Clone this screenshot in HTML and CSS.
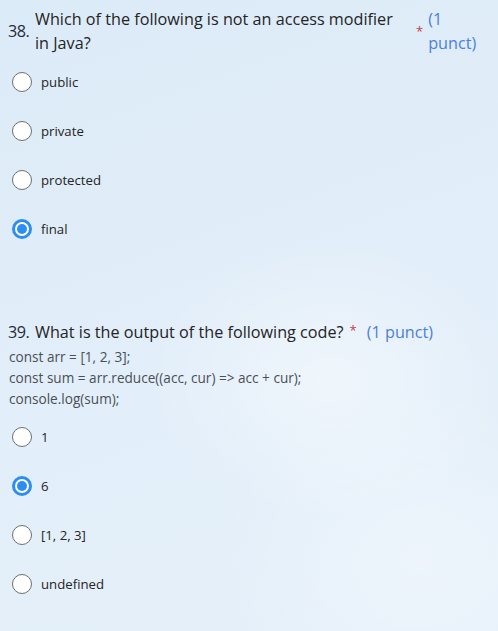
FILE: index.html
```html
<!DOCTYPE html>
<html lang="en">
<head>
<meta charset="utf-8">
<link rel="stylesheet" href="styles.css">
</head>
<body>
<div class="page">
  <section class="question q38">
    <div class="q-head">
      <span class="q-num">38.</span>
      <span class="q-title wrap">Which of the following is not an access modifier in Java?</span>
      <span class="q-req">*</span>
      <span class="q-pts wrap-pts">(1 punct)</span>
    </div>
    <div class="options">
      <label class="opt"><span class="radio"></span><span class="opt-text">public</span></label>
      <label class="opt"><span class="radio"></span><span class="opt-text">private</span></label>
      <label class="opt"><span class="radio"></span><span class="opt-text">protected</span></label>
      <label class="opt"><span class="radio checked"></span><span class="opt-text">final</span></label>
    </div>
  </section>
  <section class="question q39">
    <div class="q-head single">
      <span class="q-num">39.</span>
      <span class="q-title">What is the output of the following code?</span>
      <span class="q-req">*</span>
      <span class="q-pts">(1 punct)</span>
    </div>
    <div class="code">
      <div>const arr = [1, 2, 3];</div>
      <div>const sum = arr.reduce((acc, cur) =&gt; acc + cur);</div>
      <div>console.log(sum);</div>
    </div>
    <div class="options">
      <label class="opt"><span class="radio"></span><span class="opt-text">1</span></label>
      <label class="opt"><span class="radio checked"></span><span class="opt-text">6</span></label>
      <label class="opt"><span class="radio"></span><span class="opt-text">[1, 2, 3]</span></label>
      <label class="opt"><span class="radio"></span><span class="opt-text">undefined</span></label>
    </div>
  </section>
</div>
</body>
</html>
```
FILE: styles.css
```css
html, body {
  margin: 0;
  padding: 0;
}
body {
  width: 498px;
  height: 631px;
  overflow: hidden;
  font-family: "Open Sans", "Noto Sans", sans-serif;
  color: #242424;
  background:
    radial-gradient(ellipse 260px 200px at 330px 380px, rgba(255,255,255,0.45), rgba(255,255,255,0) 70%),
    radial-gradient(ellipse 300px 250px at 420px 560px, rgba(255,255,255,0.35), rgba(255,255,255,0) 70%),
    linear-gradient(160deg, #dcebf8 0%, #e2eef9 50%, #e5f0fa 100%);
}
.page {
  padding-top: 7px;
}
.q-head {
  display: flex;
  align-items: center;
  font-size: 16.2px;
  line-height: 24px;
}
.q-num {
  width: 35px;
  padding-left: 8px;
  box-sizing: border-box;
  color: #1f2a3a;
  flex: none;
  white-space: nowrap;
  letter-spacing: -0.5px;
}
.q-title {
  flex: none;
}
.q-title.wrap {
  width: 364px;
}
.q-req {
  color: #c4404a;
  font-size: 13px;
  margin-left: 17px;
  flex: none;
}
.q38 .q-req {
  line-height: 12px;
}
.single .q-req {
  margin-left: 6px;
  align-self: flex-start;
  line-height: 20px;
}
.q-pts {
  color: #4d7fdb;
}
.single .q-pts {
  margin-left: 10px;
}
.wrap-pts {
  width: 60px;
  margin-left: 5px;
}
.options {
  margin-top: 2px;
}
.opt {
  display: flex;
  align-items: center;
  height: 49px;
  padding-left: 12px;
  font-size: 13.2px;
  color: #242424;
}
.radio {
  width: 20px;
  height: 20px;
  box-sizing: border-box;
  border: 1px solid #6e6e6e;
  border-radius: 50%;
  background: #fff;
  flex: none;
  margin-right: 9px;
  position: relative;
}
.radio.checked {
  border: 3px solid #2d8ef2;
  background: #fff;
}
.radio.checked::after {
  content: "";
  position: absolute;
  left: 2px;
  top: 2px;
  width: 10px;
  height: 10px;
  border-radius: 50%;
  background: #2d8ef2;
}
.q39 {
  margin-top: 67px;
}
.code {
  font-size: 13.6px;
  line-height: 21px;
  color: #4a4f56;
  padding-left: 9px;
  margin-top: 2px;
}
.q39 .options {
  margin-top: 3px;
}
```
